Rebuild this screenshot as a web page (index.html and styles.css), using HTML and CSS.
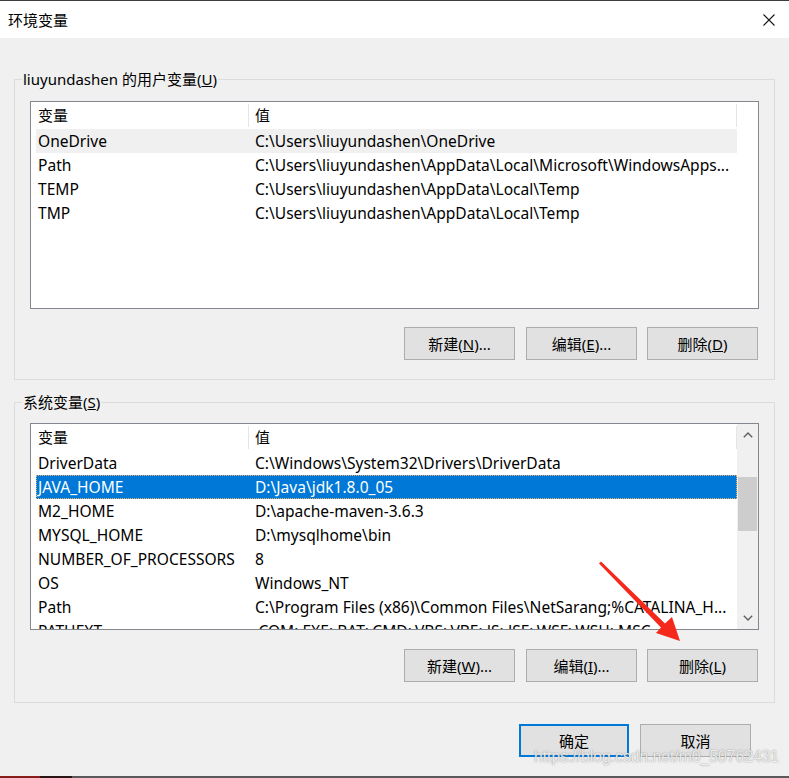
FILE: index.html
```html
<!DOCTYPE html>
<html lang="zh-CN">
<head>
<meta charset="utf-8">
<title>环境变量</title>
<link rel="stylesheet" href="styles.css">
</head>
<body>
<div class="window">
  <div class="titlebar">
    <span class="title">环境变量</span>
    <svg class="close" width="12" height="12" viewBox="0 0 12 12"><path d="M0.5 0.5 L11.5 11.5 M11.5 0.5 L0.5 11.5" stroke="#1a1a1a" stroke-width="1.1" fill="none"/></svg>
  </div>
  <div class="content">
    <fieldset class="group group-user">
      <legend>liuyundashen 的用户变量(<u>U</u>)</legend>
      <div class="listview lv-user">
        <div class="lv-main">
          <div class="lv-header"><div class="hcell h1">变量</div><div class="hcell h2">值</div></div>
          <div class="lv-rows">
            <div class="row hover"><span class="c1">OneDrive</span><span class="c2">C:\Users\liuyundashen\OneDrive</span></div>
            <div class="row"><span class="c1">Path</span><span class="c2">C:\Users\liuyundashen\AppData\Local\Microsoft\WindowsApps...</span></div>
            <div class="row"><span class="c1">TEMP</span><span class="c2">C:\Users\liuyundashen\AppData\Local\Temp</span></div>
            <div class="row"><span class="c1">TMP</span><span class="c2">C:\Users\liuyundashen\AppData\Local\Temp</span></div>
          </div>
        </div>
        <div class="lv-side"></div>
      </div>
      <div class="buttons">
        <button class="btn">新建(<u>N</u>)...</button>
        <button class="btn">编辑(<u>E</u>)...</button>
        <button class="btn">删除(<u>D</u>)</button>
      </div>
    </fieldset>

    <fieldset class="group group-sys">
      <legend>系统变量(<u>S</u>)</legend>
      <div class="listview lv-sys">
        <div class="lv-main">
          <div class="lv-header"><div class="hcell h1">变量</div><div class="hcell h2">值</div></div>
          <div class="lv-rows">
            <div class="row"><span class="c1">DriverData</span><span class="c2">C:\Windows\System32\Drivers\DriverData</span></div>
            <div class="row selected"><span class="c1">JAVA_HOME</span><span class="c2">D:\Java\jdk1.8.0_05</span></div>
            <div class="row"><span class="c1">M2_HOME</span><span class="c2">D:\apache-maven-3.6.3</span></div>
            <div class="row"><span class="c1">MYSQL_HOME</span><span class="c2">D:\mysqlhome\bin</span></div>
            <div class="row"><span class="c1">NUMBER_OF_PROCESSORS</span><span class="c2">8</span></div>
            <div class="row"><span class="c1">OS</span><span class="c2">Windows_NT</span></div>
            <div class="row"><span class="c1">Path</span><span class="c2">C:\Program Files (x86)\Common Files\NetSarang;%CATALINA_H...</span></div>
            <div class="row"><span class="c1">PATHEXT</span><span class="c2">.COM;.EXE;.BAT;.CMD;.VBS;.VBE;.JS;.JSE;.WSF;.WSH;.MSC</span></div>
          </div>
        </div>
        <div class="lv-side scrollbar">
          <div class="sb-btn"><svg width="10" height="6" viewBox="0 0 10 6"><path d="M0.8 5.2 L5 1 L9.2 5.2" stroke="#606060" stroke-width="1.4" fill="none"/></svg></div>
          <div class="sb-track"><div class="sb-thumb"></div></div>
          <div class="sb-btn"><svg width="10" height="6" viewBox="0 0 10 6"><path d="M0.8 0.8 L5 5 L9.2 0.8" stroke="#606060" stroke-width="1.4" fill="none"/></svg></div>
        </div>
      </div>
      <div class="buttons">
        <button class="btn">新建(<u>W</u>)...</button>
        <button class="btn">编辑(<u>I</u>)...</button>
        <button class="btn">删除(<u>L</u>)</button>
      </div>
    </fieldset>

    <div class="dialog-buttons">
      <button class="btn btn-default">确定</button>
      <button class="btn">取消</button>
    </div>
  </div>
  <div class="taskbar"></div>

  <div class="watermark">https://blog.csdn.net/m0_50762431</div>
  <svg class="annot-arrow" width="789" height="778" viewBox="0 0 789 778">
    <polygon points="599,563.5 601,561.5 665,623.5 672,617 680,641 656,633 661,627.5" fill="#f5281c"/>
  </svg>
</div>
</body>
</html>
```

FILE: styles.css
```css
* { box-sizing: border-box; }
html, body {
  margin: 0;
  padding: 0;
}
body {
  width: 789px;
  height: 778px;
  overflow: hidden;
  background: #f0f0f0;
  font-family: "Noto Sans", "Noto Sans CJK SC", sans-serif;
  font-size: 15px;
  color: #000;
}
.window {
  position: relative;
  width: 789px;
  height: 778px;
  display: flex;
  flex-direction: column;
  background: #f0f0f0;
}
.titlebar {
  height: 38px;
  flex: none;
  background: #fff;
  border-top: 1px solid #3d3d3d;
  display: flex;
  align-items: center;
  justify-content: space-between;
  padding: 0 14px 0 8px;
}
.title {
  line-height: 20px;
}
.close { display: block; }

.content {
  flex: 1;
  padding: 31px 14px 0 14px;
}
.group {
  margin: 0;
  border: 1px solid #dcdcdc;
  padding: 0 15px 19px 15px;
  min-width: 0;
}
.group legend {
  padding: 0 1px;
  margin-left: -8px;
  line-height: 20px;
  height: 20px;
}
.group-sys {
  margin-top: 12px;
  padding-bottom: 20px;
}
.listview {
  margin-top: 12px;
  height: 208px;
  border: 1px solid #828790;
  background: #fff;
  display: flex;
  overflow: hidden;
}
.lv-sys {
  margin-top: 11px;
  height: 207px;
}
.lv-main {
  flex: 1;
  min-width: 0;
  overflow: hidden;
}
.lv-side {
  width: 21px;
  flex: none;
}
.lv-header {
  height: 27px;
  display: flex;
  align-items: center;
}
.hcell {
  height: 23px;
  line-height: 23px;
  white-space: nowrap;
}
.h1 {
  width: 218px;
  padding-left: 7px;
  border-right: 1px solid #e5e5e5;
}
.h2 {
  flex: 1;
  padding-left: 6px;
  border-right: 1px solid #e5e5e5;
}
.lv-rows {
  padding-left: 5px;
}
.row {
  height: 24px;
  line-height: 24px;
  display: flex;
  white-space: nowrap;
  font-size: 15.55px;
}
.row .c1 {
  width: 212px;
  flex: none;
  padding-left: 2px;
}
.row .c2 {
  padding-left: 7px;
  overflow: hidden;
}
.row.hover { background: #f0f0f0; }
.row.selected {
  background: #0078d7;
  color: #fff;
  outline: 1px dotted #e7b36a;
  outline-offset: -1px;
}

.scrollbar {
  background: #f0f0f0;
  display: flex;
  flex-direction: column;
}
.sb-btn {
  height: 22px;
  flex: none;
  display: flex;
  align-items: center;
  justify-content: center;
}
.sb-btn svg { display: block; }
.sb-track {
  flex: 1;
  padding: 31px 1px 0 1px;
}
.sb-thumb {
  height: 54px;
  background: #cdcdcd;
}

.buttons {
  display: flex;
  justify-content: flex-end;
  gap: 11px;
  margin-top: 18px;
  padding-right: 1px;
}
.group-sys .buttons { margin-top: 19px; }
.btn {
  font-family: inherit;
  font-size: 15px;
  color: #000;
  width: 111px;
  height: 33px;
  padding: 0;
  background: #e1e1e1;
  border: 1px solid #adadad;
  border-radius: 0;
  line-height: 20px;
}
.buttons .btn + .btn + .btn { margin-left: -1px; }
.dialog-buttons {
  display: flex;
  justify-content: flex-end;
  gap: 11px;
  margin-top: 21px;
  padding-right: 24px;
}
.dialog-buttons .btn { height: 33px; }
.btn-default {
  width: 110px;
  border: 2px solid #0078d7;
}
.taskbar {
  height: 2px;
  flex: none;
  background: linear-gradient(to right, #8a1c1c 0, #8a1c1c 40px, #2a1414 40px, #2a1414 72px, #5a5a5a 72px, #5a5a5a 100%);
}

.watermark {
  position: absolute;
  left: 534px;
  top: 748px;
  font-family: "Liberation Sans", Arial, sans-serif;
  font-size: 15.7px;
  line-height: 18px;
  color: rgba(255, 255, 255, 0.82);
  text-shadow: 0 0 1px rgba(90, 90, 90, 0.55), 0 0 2px rgba(120, 120, 120, 0.35);
  white-space: nowrap;
  pointer-events: none;
}
.annot-arrow {
  position: absolute;
  left: 0;
  top: 0;
  pointer-events: none;
}
```
